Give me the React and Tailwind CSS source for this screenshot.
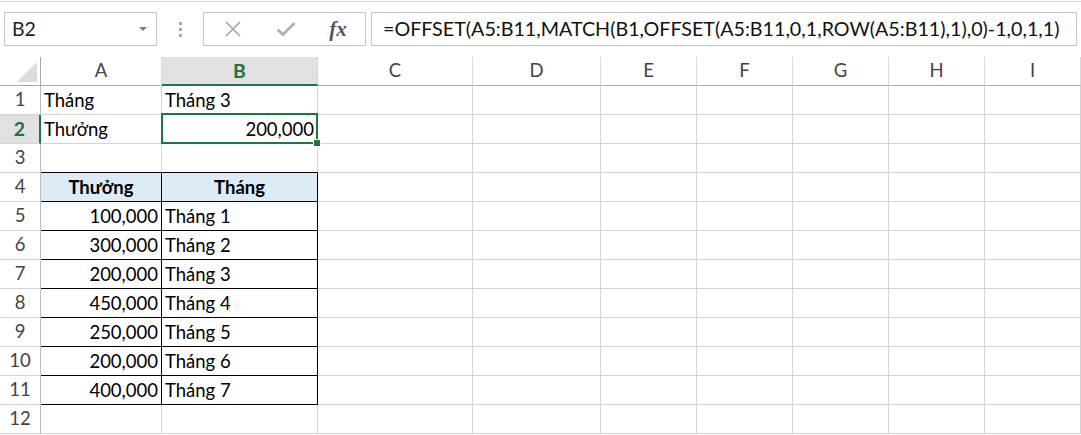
import React from "react";

const FONT = { fontFamily: "Lato, 'Open Sans', sans-serif" };

const COLS = ["A", "B", "C", "D", "E", "F", "G", "H", "I"];

// cell contents: [row][col] -> { v, align, bold }
const DATA = {
  1: { A: { v: "Tháng" }, B: { v: "Tháng 3" } },
  2: { A: { v: "Thưởng" }, B: { v: "200,000", align: "right" } },
  4: { A: { v: "Thưởng", align: "center", bold: true }, B: { v: "Tháng", align: "center", bold: true } },
  5: { A: { v: "100,000", align: "right" }, B: { v: "Tháng 1" } },
  6: { A: { v: "300,000", align: "right" }, B: { v: "Tháng 2" } },
  7: { A: { v: "200,000", align: "right" }, B: { v: "Tháng 3" } },
  8: { A: { v: "450,000", align: "right" }, B: { v: "Tháng 4" } },
  9: { A: { v: "250,000", align: "right" }, B: { v: "Tháng 5" } },
  10: { A: { v: "200,000", align: "right" }, B: { v: "Tháng 6" } },
  11: { A: { v: "400,000", align: "right" }, B: { v: "Tháng 7" } },
};

function FormulaBar() {
  return (
    <div className="mt-px border-t border-[#d5d5d5] pt-[10px] pb-[11px] flex items-center bg-white">
      {/* Name box */}
      <div className="ml-[4px] w-[153px] h-[34px] border border-[#c6c6c6] flex items-center justify-between pl-[7px] pr-[9px]">
        <span className="text-[19.5px] text-[#222]">B2</span>
        <span className="w-0 h-0 border-l-[4px] border-r-[4px] border-t-[4px] border-l-transparent border-r-transparent border-t-[#7a7a7a]" />
      </div>
      {/* grip dots */}
      <div className="w-[46px] flex flex-col items-center gap-[3px]">
        <span className="w-[3px] h-[3px] bg-[#a8a8a8]" />
        <span className="w-[3px] h-[3px] bg-[#a8a8a8]" />
        <span className="w-[3px] h-[3px] bg-[#a8a8a8]" />
      </div>
      {/* cancel / enter / fx */}
      <div className="w-[163px] h-[34px] border border-[#c6c6c6] flex items-center">
        <div className="w-[57px] flex justify-center">
          <svg width="18" height="18" viewBox="0 0 18 18">
            <path d="M2 2 L16 16 M16 2 L2 16" stroke="#a6a6a6" strokeWidth="1.6" fill="none" />
          </svg>
        </div>
        <div className="w-[50px] flex justify-center">
          <svg width="20" height="16" viewBox="0 0 20 16">
            <path d="M1.5 8.5 L7 13.5 L18.5 2" stroke="#b3b3b3" strokeWidth="3" fill="none" />
          </svg>
        </div>
        <div className="flex-1 flex justify-center">
          <span className="italic font-bold text-[21px] text-[#555] leading-none" style={{ fontFamily: "'Liberation Serif', serif" }}>
            fx
          </span>
        </div>
      </div>
      {/* formula */}
      <div className="ml-[5px] w-[706px] h-[34px] border border-[#c6c6c6] flex items-center pl-[11px]">
        <span className="text-[19.7px] text-[#111] whitespace-nowrap">
          =OFFSET(A5:B11,MATCH(B1,OFFSET(A5:B11,0,1,ROW(A5:B11),1),0)-1,0,1,1)
        </span>
      </div>
    </div>
  );
}

function HeaderRow() {
  return (
    <>
      <div className="relative h-[29px] border-r border-b border-[#ababab] bg-white">
        <svg className="absolute right-[3px] bottom-[3px]" width="20" height="20" viewBox="0 0 20 20">
          <path d="M20 0 L20 20 L0 20 Z" fill="#dcdcdc" />
        </svg>
      </div>
      {COLS.map((c) =>
        c === "B" ? (
          <div
            key={c}
            className="h-[29px] bg-[#e1e1e1] border-r border-[#d4d4d4] border-b-2 border-b-[#217346] flex items-center justify-center text-[19.5px] font-bold text-[#217346]"
          >
            {c}
          </div>
        ) : (
          <div
            key={c}
            className="h-[29px] bg-white border-r border-[#dadada] border-b border-b-[#ababab] flex items-center justify-center text-[18.5px] text-[#444]"
          >
            {c}
          </div>
        )
      )}
    </>
  );
}

function Cell({ r, c }) {
  const d = DATA[r]?.[c];
  const inTable = (c === "A" || c === "B") && r >= 4 && r <= 11;
  const aboveTable = (c === "A" || c === "B") && r === 3;
  const active = r === 2 && c === "B";

  const rightCls = inTable ? "border-r-black" : "border-r-[#d4d4d4]";
  const bottomCls = inTable || aboveTable ? "border-b-black" : "border-b-[#d4d4d4]";
  const bg = r === 4 && inTable ? "bg-[#ddebf7]" : "bg-white";
  const justify =
    d?.align === "right" ? "justify-end" : d?.align === "center" ? "justify-center" : "justify-start";

  return (
    <div
      className={`relative h-[29px] border-r border-b ${rightCls} ${bottomCls} ${bg} flex items-center ${justify} px-[3px] pt-[2px]`}
    >
      {d && (
        <span className={`text-[18.5px] text-black whitespace-nowrap ${d.bold ? "font-bold" : ""}`}>{d.v}</span>
      )}
      {active && (
        <div className="absolute -left-[1px] -top-[2px] -right-[1px] -bottom-[1px] border-2 border-[#217346] z-10 pointer-events-none">
          <span className="absolute -right-[5px] -bottom-[5px] w-[8px] h-[8px] bg-[#217346] border border-white" />
        </div>
      )}
    </div>
  );
}

function RowHeader({ r }) {
  if (r === 2) {
    return (
      <div className="h-[29px] bg-[#e1e1e1] border-r-2 border-r-[#217346] border-b border-b-[#d4d4d4] flex items-center justify-center text-[19.5px] font-bold text-[#217346]">
        {r}
      </div>
    );
  }
  return (
    <div className="h-[29px] bg-white border-r border-r-[#bcbcbc] border-b border-b-[#d4d4d4] flex items-center justify-center text-[18.5px] text-[#444]">
      {r}
    </div>
  );
}

export default function App() {
  const rows = Array.from({ length: 12 }, (_, i) => i + 1);
  return (
    <div className="w-[1081px] h-[435px] overflow-hidden bg-white" style={FONT}>
      <FormulaBar />
      <div className="grid grid-cols-[41px_121px_156px_155px_128px_96px_96px_96px_96px_96px]">
        <HeaderRow />
        {rows.map((r) => (
          <React.Fragment key={r}>
            <RowHeader r={r} />
            {COLS.map((c) => (
              <Cell key={c} r={r} c={c} />
            ))}
          </React.Fragment>
        ))}
      </div>
    </div>
  );
}
